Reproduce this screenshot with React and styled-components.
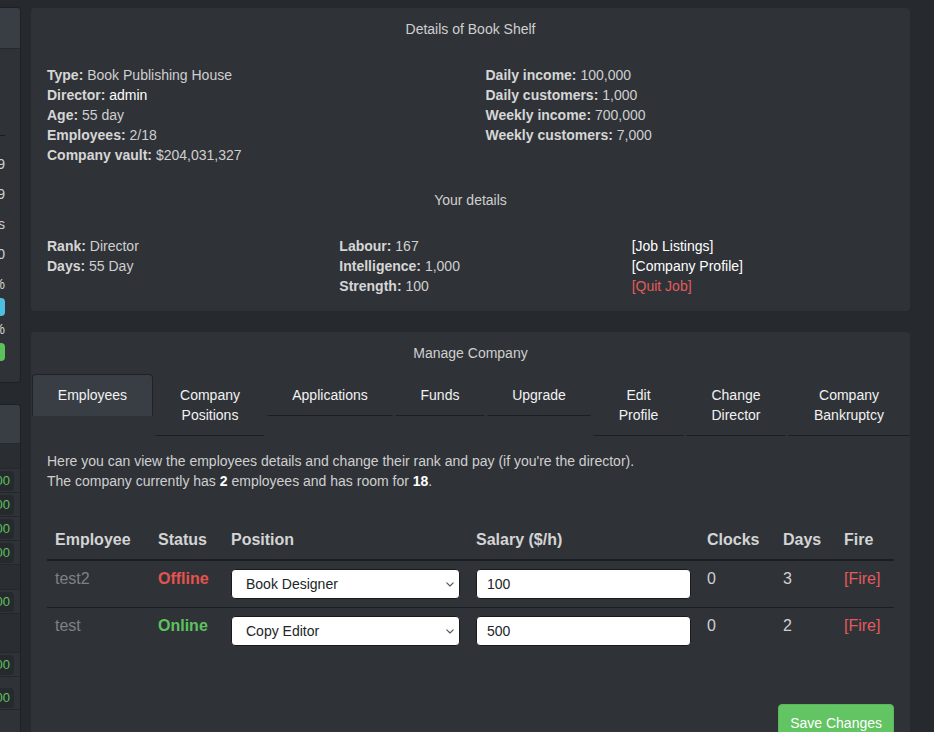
import React from 'react';
import styled, { createGlobalStyle } from 'styled-components';

const Global = createGlobalStyle`
  html, body { margin: 0; padding: 0; background: #26292d; }
  body {
    font-family: "Liberation Sans", Arial, sans-serif;
    font-size: 14px;
    color: #cfcfcf;
    overflow: hidden;
  }
  * { box-sizing: border-box; }
`;

const Page = styled.div`
  display: flex;
  align-items: flex-start;
  gap: 10px;
  padding: 7px 24px 0 0;
  height: 732px;
  overflow: hidden;
`;

/* ---------- Sidebar (clipped column on the left) ---------- */
const Sidebar = styled.aside`
  width: 21px;
  flex: none;
  overflow: hidden;
  display: flex;
  flex-direction: column;
  align-items: flex-end;
  gap: 21px;
`;

const SidePanel = styled.section`
  width: 240px;
  flex: none;
  background: #2f3338;
  border: 1px solid #1d2024;
  border-radius: 4px;
  overflow: hidden;
  padding-bottom: ${p => p.$pb || 0}px;
`;

const SideHeader = styled.div`
  height: ${p => p.$h}px;
  background: #393e45;
  border-bottom: 1px solid #262a2e;
  padding: 10px 15px;
  color: #e0e0e0;
`;

const SideBody = styled.div`
  padding: 0 15px 21px;
`;

const Profile = styled.div`
  height: 87px;
  padding-top: 14px;
  border-bottom: 1px solid #1a1d20;
  color: #e0e0e0;
`;

const StatList = styled.div`
  padding-top: 13px;
`;

const StatRow = styled.div`
  display: flex;
  justify-content: space-between;
  align-items: center;
  height: ${p => p.$h || 30}px;
  margin-top: ${p => p.$mt || 0}px;
  color: #cfcfcf;
`;

const Bar = styled.div`
  height: 18px;
  margin-top: 5px;
  border-radius: 4px;
  background: ${p => p.$color};
`;

const SubHead = styled.div`
  height: ${p => p.$h || 25}px;
  background: #2a2e33;
  border-bottom: 1px solid #24272b;
  padding: 4px 10px;
  color: #bdbdbd;
  font-size: 13px;
`;

const ListRow = styled.div`
  display: flex;
  justify-content: space-between;
  align-items: center;
  height: 24px;
  margin-bottom: ${p => p.$mb || 0}px;
  padding: 0 6px 0 10px;
  border-bottom: 1px solid #24272b;
  color: #cfcfcf;
  font-size: 13px;
`;

const Badge = styled.span`
  background: #262a2e;
  color: #5ec25e;
  border-radius: 4px;
  padding: 2px 4px;
  font-size: 13px;
  line-height: 16px;
`;

/* ---------- Main column ---------- */
const Main = styled.main`
  width: 879px;
  flex: none;
  display: flex;
  flex-direction: column;
  gap: 21px;
  padding-top: 1px;
`;

const Panel = styled.section`
  background: #2f3338;
  border-radius: 4px;
  padding: 11px 16px 15px;
`;

const Title = styled.div`
  text-align: center;
  line-height: 20px;
  color: #cfcfcf;
  margin-bottom: ${p => p.$mb ?? 26}px;
`;

const InfoGrid = styled.div`
  display: grid;
  grid-template-columns: repeat(${p => p.$cols}, 1fr);
  column-gap: 30px;
  margin-bottom: ${p => p.$mb || 0}px;
`;

const Col = styled.div`
  display: flex;
  flex-direction: column;
`;

const Line = styled.div`
  line-height: 20px;
  color: #cfcfcf;
  white-space: nowrap;
`;

const Label = styled.b`
  color: #d6d6d6;
`;

const White = styled.span`
  color: #ffffff;
`;

const RedLink = styled.span`
  color: #e35b5b;
`;

/* ---------- Tabs ---------- */
const TabBar = styled.nav`
  display: flex;
  align-items: flex-start;
  gap: 2px;
  margin: 12px -16px 0 -15px;
`;

const Tab = styled.div`
  width: ${p => p.$w}px;
  flex: none;
  padding: 10px 6px;
  line-height: 20px;
  text-align: center;
  white-space: pre-line;
  color: #f2f2f2;
  border: 1px solid transparent;
  border-bottom: 1px solid ${p => (p.$active ? 'transparent' : '#1c1f22')};
  border-radius: 4px 4px 0 0;
  background: ${p => (p.$active ? '#393e45' : 'transparent')};
  ${p => p.$active && 'border-color: #1f2226; border-bottom-color: transparent;'}
  margin-top: -1px;
`;

const TabContent = styled.div`
  padding-top: 15px;
`;

const Intro = styled.p`
  margin: 0;
  line-height: 20px;
  color: #cfcfcf;
  b { color: #ffffff; }
`;

/* ---------- Table ---------- */
const Table = styled.table`
  width: 847px;
  margin-top: 30px;
  border-collapse: collapse;
  table-layout: fixed;
  font-size: 16px;
`;

const Th = styled.th`
  text-align: left;
  padding: 8px;
  line-height: 22px;
  font-weight: bold;
  color: #d4d4d4;
  border-bottom: 2px solid #1c1f22;
`;

const Tr = styled.tr`
  border-bottom: 1px solid #1c1f22;
  &:last-child { border-bottom: none; }
`;

const Td = styled.td`
  padding: 8px;
  line-height: 20px;
  vertical-align: top;
  color: ${p => p.$color || '#cfcfcf'};
  font-weight: ${p => (p.$bold ? 'bold' : 'normal')};
`;

const SelectWrap = styled.div`
  position: relative;
`;

const Select = styled.select`
  appearance: none;
  -webkit-appearance: none;
  width: 100%;
  height: 30px;
  padding: 0 28px 0 14px;
  border: 1px solid #1a1a1a;
  border-radius: 4px;
  background: #ffffff;
  color: #212529;
  font-family: "Liberation Sans", Arial, sans-serif;
  font-size: 14px;
  display: block;
`;

const Chevron = styled.svg`
  position: absolute;
  right: 6px;
  top: 13px;
  pointer-events: none;
`;

const Input = styled.input`
  width: 100%;
  height: 30px;
  padding: 0 10px;
  border: 1px solid #1a1a1a;
  border-radius: 4px;
  background: #ffffff;
  color: #212529;
  font-family: "Liberation Sans", Arial, sans-serif;
  font-size: 14px;
  display: block;
`;

const Footer = styled.div`
  display: flex;
  justify-content: flex-end;
  margin-top: 50px;
`;

const SaveButton = styled.button`
  background: #62c462;
  color: #ffffff;
  border: 1px solid #5bb75b;
  border-radius: 4px;
  padding: 9px 11px;
  font-family: "Liberation Sans", Arial, sans-serif;
  font-size: 14px;
  line-height: 18px;
`;

const tabs = [
  { label: 'Employees', w: 121, active: true },
  { label: 'Company\nPositions', w: 110 },
  { label: 'Applications', w: 126 },
  { label: 'Funds', w: 90 },
  { label: 'Upgrade', w: 104 },
  { label: 'Edit\nProfile', w: 91 },
  { label: 'Change\nDirector', w: 100 },
  { label: 'Company\nBankruptcy', w: 122 },
];

const employees = [
  { name: 'test2', online: false, position: 'Book Designer', salary: '100', clocks: 0, days: 3 },
  { name: 'test', online: true, position: 'Copy Editor', salary: '500', clocks: 0, days: 2 },
];

const positions = ['Book Designer', 'Copy Editor', 'Proofreader', 'Editor'];

export default function App() {
  return (
    <>
      <Global />
      <Page>
        <Sidebar>
          <SidePanel>
            <SideHeader $h={41}>admin</SideHeader>
            <SideBody>
              <Profile>Welcome back</Profile>
              <StatList>
                <StatRow><span>Level</span><span>9</span></StatRow>
                <StatRow><span>Experience</span><span>1,209</span></StatRow>
                <StatRow><span>Rank</span><span>Boss</span></StatRow>
                <StatRow><span>Crimes</span><span>0</span></StatRow>
                <StatRow $h={18} $mt={6}><span>Energy</span><span>100%</span></StatRow>
                <Bar $color="#4fbfe0" />
                <StatRow $h={18} $mt={4}><span>Health</span><span>100%</span></StatRow>
                <Bar $color="#5cc15c" />
              </StatList>
            </SideBody>
          </SidePanel>
          <SidePanel $pb={60}>
            <SideHeader $h={39}>Stats</SideHeader>
            <SubHead>Battle stats</SubHead>
            <ListRow><span>Strength</span><Badge>100</Badge></ListRow>
            <ListRow><span>Defense</span><Badge>100</Badge></ListRow>
            <ListRow><span>Speed</span><Badge>100</Badge></ListRow>
            <ListRow><span>Dexterity</span><Badge>100</Badge></ListRow>
            <SubHead>Working stats</SubHead>
            <ListRow><span>Labour</span><Badge>100</Badge></ListRow>
            <SubHead $h={39}>Other</SubHead>
            <ListRow $mb={9}><span>Points</span><Badge>100</Badge></ListRow>
            <ListRow><span>Credits</span><Badge>100</Badge></ListRow>
          </SidePanel>
        </Sidebar>

        <Main>
          <Panel>
            <Title>Details of Book Shelf</Title>
            <InfoGrid $cols={2} $mb={25}>
              <Col>
                <Line><Label>Type:</Label> Book Publishing House</Line>
                <Line><Label>Director:</Label> <White>admin</White></Line>
                <Line><Label>Age:</Label> 55 day</Line>
                <Line><Label>Employees:</Label> 2/18</Line>
                <Line><Label>Company vault:</Label> $204,031,327</Line>
              </Col>
              <Col>
                <Line><Label>Daily income:</Label> 100,000</Line>
                <Line><Label>Daily customers:</Label> 1,000</Line>
                <Line><Label>Weekly income:</Label> 700,000</Line>
                <Line><Label>Weekly customers:</Label> 7,000</Line>
              </Col>
            </InfoGrid>
            <Title>Your details</Title>
            <InfoGrid $cols={3}>
              <Col>
                <Line><Label>Rank:</Label> Director</Line>
                <Line><Label>Days:</Label> 55 Day</Line>
              </Col>
              <Col>
                <Line><Label>Labour:</Label> 167</Line>
                <Line><Label>Intelligence:</Label> 1,000</Line>
                <Line><Label>Strength:</Label> 100</Line>
              </Col>
              <Col>
                <Line><White>[Job Listings]</White></Line>
                <Line><White>[Company Profile]</White></Line>
                <Line><RedLink>[Quit Job]</RedLink></Line>
              </Col>
            </InfoGrid>
          </Panel>

          <Panel>
            <Title $mb={0}>Manage Company</Title>
            <TabBar>
              {tabs.map(t => (
                <Tab key={t.label} $w={t.w} $active={t.active}>{t.label}</Tab>
              ))}
            </TabBar>
            <TabContent>
              <Intro>
                Here you can view the employees details and change their rank and pay (if you're the director).
                <br />
                The company currently has <b>2</b> employees and has room for <b>18</b>.
              </Intro>
              <Table>
                <colgroup>
                  <col style={{ width: 103 }} />
                  <col style={{ width: 73 }} />
                  <col style={{ width: 245 }} />
                  <col style={{ width: 231 }} />
                  <col style={{ width: 76 }} />
                  <col style={{ width: 61 }} />
                  <col style={{ width: 58 }} />
                </colgroup>
                <thead>
                  <tr>
                    <Th>Employee</Th>
                    <Th>Status</Th>
                    <Th>Position</Th>
                    <Th>Salary ($/h)</Th>
                    <Th>Clocks</Th>
                    <Th>Days</Th>
                    <Th>Fire</Th>
                  </tr>
                </thead>
                <tbody>
                  {employees.map(e => (
                    <Tr key={e.name}>
                      <Td $color="#7d8186">{e.name}</Td>
                      <Td $bold $color={e.online ? '#5ec25e' : '#e5534f'}>
                        {e.online ? 'Online' : 'Offline'}
                      </Td>
                      <Td>
                        <SelectWrap>
                          <Select defaultValue={e.position}>
                            {positions.map(p => <option key={p}>{p}</option>)}
                          </Select>
                          <Chevron width="8" height="5" viewBox="0 0 8 5">
                            <path d="M0.8 0.8l3.2 3.2 3.2-3.2" fill="none" stroke="#555" strokeWidth="1.1" strokeLinecap="round" strokeLinejoin="round" />
                          </Chevron>
                        </SelectWrap>
                      </Td>
                      <Td><Input defaultValue={e.salary} /></Td>
                      <Td>{e.clocks}</Td>
                      <Td>{e.days}</Td>
                      <Td $color="#e35b5b">[Fire]</Td>
                    </Tr>
                  ))}
                </tbody>
              </Table>
              <Footer>
                <SaveButton>Save Changes</SaveButton>
              </Footer>
            </TabContent>
          </Panel>
        </Main>
      </Page>
    </>
  );
}
